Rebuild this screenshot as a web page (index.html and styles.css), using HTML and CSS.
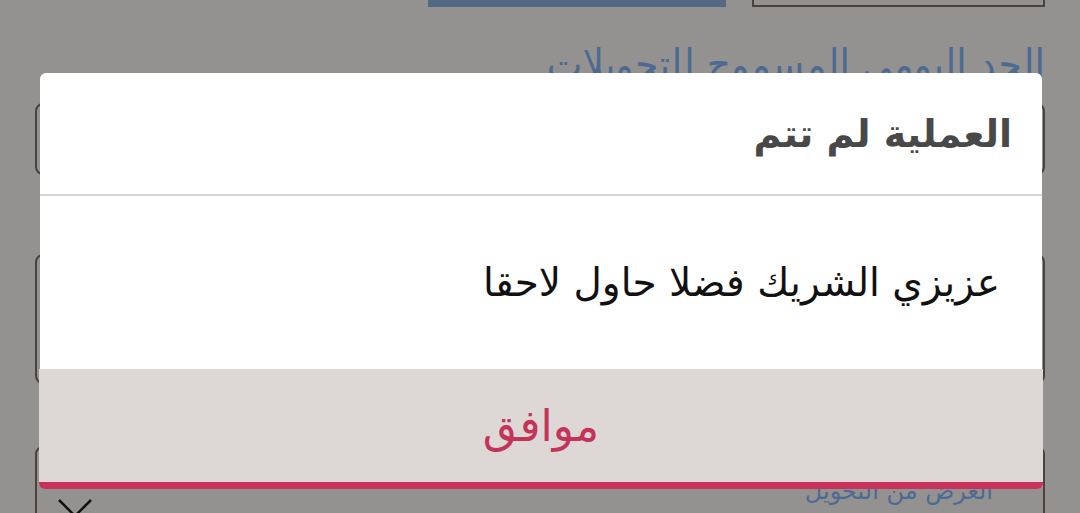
FILE: index.html
```html
<!DOCTYPE html>
<html lang="ar" dir="rtl">
<head>
<meta charset="utf-8">
<link rel="stylesheet" href="styles.css">
</head>
<body>
<main class="page">
  <div class="top-actions">
    <div class="btn-outline"></div>
    <div class="btn-primary"></div>
  </div>
  <label class="field-label">الحد اليومي المسموح للتحويلات</label>
  <div class="field field-one"></div>
  <div class="field field-two"></div>
  <div class="field field-three">
    <span class="field-hint">الغرض من التحويل</span>
    <span class="field-x">
      <svg width="36" height="20" viewBox="0 0 36 20"><path d="M2 2 L18 18 L34 2" fill="none" stroke="#111" stroke-width="2.5"/></svg>
    </span>
  </div>
</main>

<div class="dialog">
  <div class="dialog-title">العملية لم تتم</div>
  <div class="dialog-body">عزيزي الشريك فضلا حاول لاحقا</div>
  <button class="dialog-btn">موافق</button>
</div>
</body>
</html>
```
FILE: styles.css
```css
* { box-sizing: border-box; }
html, body { margin: 0; padding: 0; }
body {
  width: 1080px;
  height: 513px;
  overflow: hidden;
  background: #949290;
  font-family: "DejaVu Sans", "Noto Sans", sans-serif;
  position: relative;
}
.page {
  padding: 0 35px 0 35px;
  display: flex;
  flex-direction: column;
  height: 513px;
  overflow: hidden;
}
.top-actions {
  display: flex;
  gap: 26px;
  height: 7px;
  flex-shrink: 0;
}
.btn-outline {
  width: 293px;
  height: 7px;
  border: 2px solid #4a423d;
  border-top: none;
}
.btn-primary {
  width: 298px;
  height: 7px;
  background: #526884;
}
.field-label {
  margin-top: 34px;
  color: #4d6b92;
  font-family: "DejaVu Sans Condensed", "DejaVu Sans", sans-serif;
  font-size: 42px;
  line-height: 48px;
  text-align: right;
  white-space: nowrap;
  flex-shrink: 0;
}
.field {
  border: 2px solid #4a423d;
  border-radius: 8px;
  flex-shrink: 0;
}
.field-one {
  margin-top: 14px;
  height: 72px;
}
.field-two {
  margin-top: 79px;
  height: 130px;
}
.field-three {
  margin-top: 62px;
  height: 90px;
  display: flex;
  justify-content: space-between;
  padding: 28px 50px 0 20px;
}
.field-hint {
  color: #4d6b92;
  font-size: 24px;
  line-height: 30px;
}
.field-x { padding-top: 22px; }

.dialog {
  position: absolute;
  left: 40px;
  top: 73px;
  width: 1002px;
  display: flex;
  flex-direction: column;
  background: #fff;
  border-radius: 6px;
}
.dialog-title {
  height: 123px;
  padding: 0 30px;
  display: flex;
  align-items: center;
  font-size: 38px;
  font-weight: bold;
  color: #484848;
  border-bottom: 2px solid #d8d6d4;
}
.dialog-body {
  height: 173px;
  padding: 0 42px;
  display: flex;
  align-items: center;
  font-size: 39px;
  color: #111;
}
.dialog-btn {
  margin: 0 -1px;
  height: 120px;
  border: none;
  border-bottom: 7px solid #c8325a;
  border-radius: 0 0 6px 6px;
  background: #ddd8d5;
  color: #c4335a;
  font-family: "DejaVu Sans", sans-serif;
  font-size: 44px;
  padding: 0;
}
```
